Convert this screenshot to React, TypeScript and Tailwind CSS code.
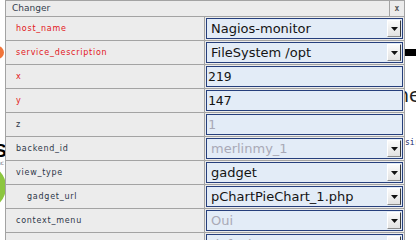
import React from 'react'

type Row = {
  label: string
  required?: boolean
  indent?: boolean
  kind: 'select' | 'text'
  value?: string
  disabled?: boolean
}

const rows: Row[] = [
  { label: 'host_name', required: true, kind: 'select', value: 'Nagios-monitor' },
  { label: 'service_description', required: true, kind: 'select', value: 'FileSystem /opt' },
  { label: 'x', required: true, kind: 'text', value: '219' },
  { label: 'y', required: true, kind: 'text', value: '147' },
  { label: 'z', kind: 'text', value: '1', disabled: true },
  { label: 'backend_id', kind: 'select', value: 'merlinmy_1', disabled: true },
  { label: 'view_type', kind: 'select', value: 'gadget' },
  { label: 'gadget_url', indent: true, kind: 'select', value: 'pChartPieChart_1.php' },
  { label: 'context_menu', kind: 'select', value: 'Oui', disabled: true },
  { label: '', kind: 'select', value: 'default', disabled: true },
]

function DropButton() {
  return (
    <div className="flex h-[17px] w-[14px] items-center justify-center border border-b-[#8a8a8a] border-r-[#3c3c3c] border-l-white border-t-white bg-gradient-to-b from-[#fbfbfb] to-[#e2e2e2]">
      <svg width="7" height="4" viewBox="0 0 7 4">
        <path d="M0 0h7L3.5 4z" fill="#111" />
      </svg>
    </div>
  )
}

function Field({ row }: { row: Row }) {
  const color = row.disabled ? 'text-[#a9a9b6]' : 'text-[#141414]'
  if (row.kind === 'text') {
    return (
      <div className="flex h-[21px] w-[197px] items-center border border-[#263f7c] bg-[#e3ecf7] pl-[1px]">
        <span className={`font-['DejaVu_Sans_Mono',monospace] text-[13px] leading-none ${color}`}>{row.value}</span>
      </div>
    )
  }
  return (
    <div className="flex h-[21px] w-[197px] items-center justify-between border border-[#263f7c] bg-[#e3ecf7] pl-[4px] pr-[1px]">
      <span className={`font-['DejaVu_Sans',sans-serif] text-[13px] leading-none ${color}`}>{row.value}</span>
      <DropButton />
    </div>
  )
}

export default function App() {
  return (
    <div className="relative h-[240px] w-[416px] overflow-hidden bg-white">
      {/* page behind the dialog */}
      <div className="absolute left-[-9px] top-[46px] h-[13px] w-[13px] rounded-full bg-[#f0743a]" />
      <div className="absolute left-[-6px] top-[141px] font-['Liberation_Sans',sans-serif] text-[19px] font-bold leading-none text-black">S</div>
      <div className="absolute left-[-3px] top-[160px] font-['DejaVu_Sans',sans-serif] text-[6px] leading-none text-[#777]">nc</div>
      <div className="absolute left-[-40px] top-[164px] h-[46px] w-[46px] rounded-full border-[7px] border-[#8cc63f] bg-[#e9f5d5]" />
      <div className="absolute left-[405px] top-[49px] h-[7px] w-[20px] bg-black" />
      <div className="absolute left-[397px] top-[86px] font-['DejaVu_Sans',sans-serif] text-[19px] leading-none text-[#222]">he</div>
      <div className="absolute left-[405px] top-[139px] font-['DejaVu_Sans_Mono',monospace] text-[8px] leading-none text-[#1b2a6a]">sir</div>

      {/* Changer dialog */}
      <div className="absolute left-[5px] top-0 w-[400px] border-x border-t border-[#a3a3a3] bg-[#ececec]">
        <div className="flex h-[16px] border-b border-[#a3a3a3]">
          <div className="flex flex-1 items-center pl-[6px] font-['DejaVu_Sans',sans-serif] text-[9px] leading-none text-[#34404f]">
            Changer
          </div>
          <div className="flex w-[15px] items-center justify-center border-l border-[#a3a3a3] font-['DejaVu_Sans_Mono',monospace] text-[8px] font-bold leading-none text-[#555]">
            x
          </div>
        </div>
        {rows.map((row, i) => (
          <div key={i} className="flex h-[24px] border-b border-[#a3a3a3]">
            <div
              className={`flex w-[199px] items-center border-r border-[#a3a3a3] font-['DejaVu_Sans',sans-serif] text-[8px] leading-none tracking-[0.75px] ${
                row.indent ? 'pl-[21px]' : 'pl-[10px]'
              } ${row.required ? 'text-[#e3151b]' : 'text-[#2d3648]'}`}
            >
              {row.label}
            </div>
            <div className="flex-1 pl-[1px] pt-[1px]">
              <Field row={row} />
            </div>
          </div>
        ))}
      </div>
    </div>
  )
}
